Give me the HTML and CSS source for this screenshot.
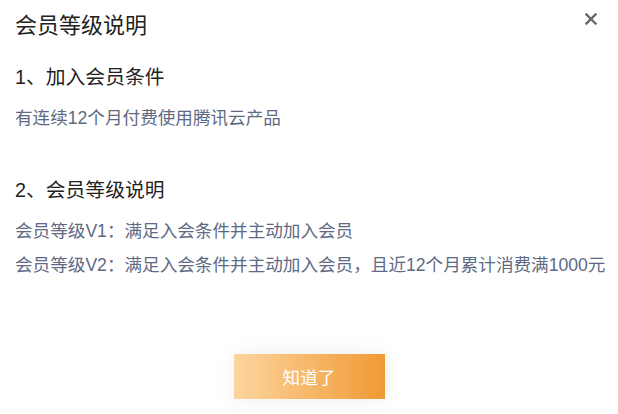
FILE: index.html
```html
<!DOCTYPE html>
<html lang="zh-CN">
<head>
  <meta charset="UTF-8" />
  <meta name="viewport" content="width=device-width, initial-scale=1" />
  <title>会员等级说明</title>
  <link rel="stylesheet" href="styles.css">
</head>
<body>
  <div class="dialog">
    <div class="dialog-header">
      <h2>会员等级说明</h2>
      <svg class="close-btn" width="12" height="12" viewBox="0 0 12 12">
        <path d="M1.5 1.5 L10.5 10.5 M10.5 1.5 L1.5 10.5" stroke="#666" stroke-width="2.4" stroke-linecap="square" />
      </svg>
    </div>

    <div class="section">
      <h3>1、加入会员条件</h3>
      <p>有连续12个月付费使用腾讯云产品</p>
    </div>

    <div class="section section-2">
      <h3>2、会员等级说明</h3>
      <p>会员等级V1：满足入会条件并主动加入会员</p>
      <p>会员等级V2：满足入会条件并主动加入会员，且近12个月累计消费满1000元</p>
    </div>

    <div class="dialog-footer">
      <button class="ok-btn">知道了</button>
    </div>
  </div>
</body>
</html>
```

FILE: styles.css
```css
body {
  margin: 0;
  background: #fff;
  font-family: "Liberation Sans", "Noto Sans CJK SC", sans-serif;
}

.dialog {
  width: 618px;
  height: 414px;
  padding: 0 15px;
  box-sizing: border-box;
  display: flex;
  flex-direction: column;
}

.dialog-header {
  height: 46px;
  display: flex;
  justify-content: space-between;
  align-items: center;
}

.dialog-header h2 {
  margin: 0;
  font-size: 22px;
  font-weight: normal;
  color: #222;
}

.close-btn {
  margin-top: -8px;
  margin-right: 6px;
  cursor: pointer;
}

.section h3 {
  margin: 16px 0 0;
  font-size: 19.8px;
  font-weight: normal;
  line-height: 30px;
  color: #222;
}

.section p {
  margin: 11px 0 0;
  font-size: 17.6px;
  line-height: 30px;
  color: #5e6a84;
  white-space: nowrap;
}

.section-2 {
  margin-top: 26px;
}

.section-2 p + p {
  margin-top: 4px;
}

.dialog-footer {
  margin-top: auto;
  padding-bottom: 15px;
  display: flex;
  justify-content: center;
}

.ok-btn {
  width: 151px;
  height: 45px;
  border: none;
  background: linear-gradient(90deg, #fcd59e, #f09a34);
  box-shadow: 0 0 22px rgba(0, 0, 0, 0.07);
  color: #fff;
  font-family: inherit;
  font-size: 17.6px;
  cursor: pointer;
}
```
